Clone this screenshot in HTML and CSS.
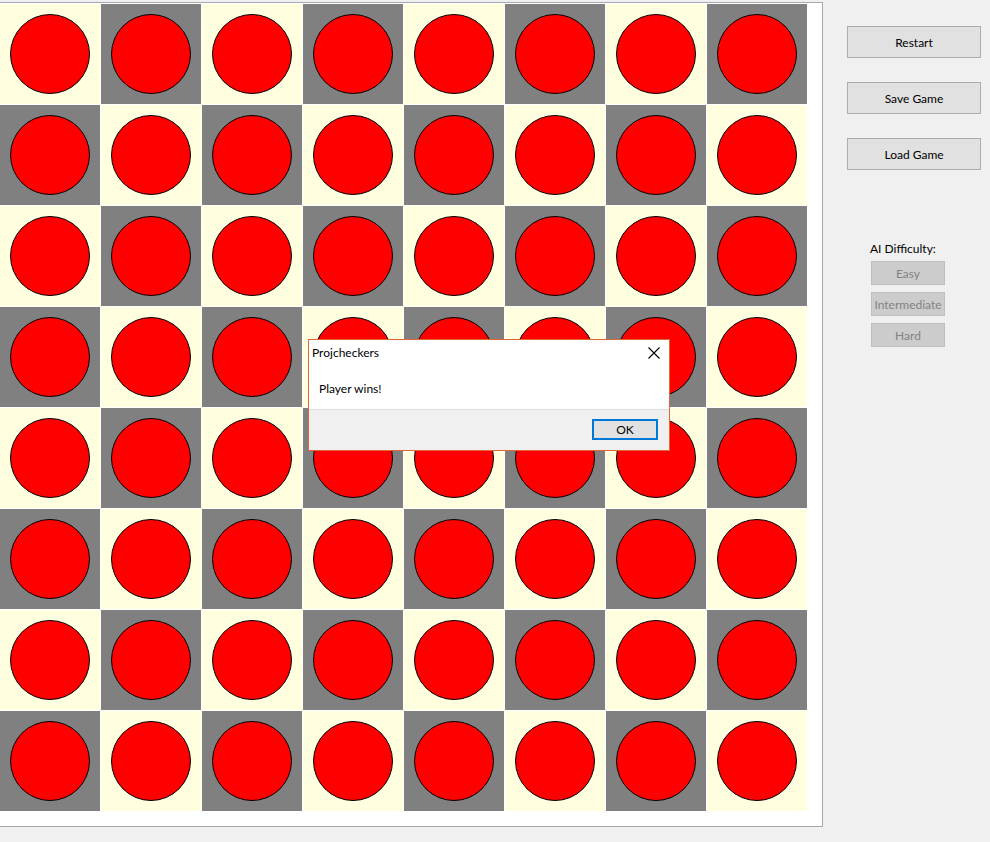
FILE: index.html
```html
<!DOCTYPE html>
<html>
<head>
<meta charset="utf-8">
<link rel="stylesheet" href="styles.css">
</head>
<body>
<div class="app">
  <div class="board-panel">
    <div class="board">
      <div class="cell light"><div class="piece"></div></div><div class="cell dark"><div class="piece"></div></div><div class="cell light"><div class="piece"></div></div><div class="cell dark"><div class="piece"></div></div><div class="cell light"><div class="piece"></div></div><div class="cell dark"><div class="piece"></div></div><div class="cell light"><div class="piece"></div></div><div class="cell dark"><div class="piece"></div></div>
      <div class="cell dark"><div class="piece"></div></div><div class="cell light"><div class="piece"></div></div><div class="cell dark"><div class="piece"></div></div><div class="cell light"><div class="piece"></div></div><div class="cell dark"><div class="piece"></div></div><div class="cell light"><div class="piece"></div></div><div class="cell dark"><div class="piece"></div></div><div class="cell light"><div class="piece"></div></div>
      <div class="cell light"><div class="piece"></div></div><div class="cell dark"><div class="piece"></div></div><div class="cell light"><div class="piece"></div></div><div class="cell dark"><div class="piece"></div></div><div class="cell light"><div class="piece"></div></div><div class="cell dark"><div class="piece"></div></div><div class="cell light"><div class="piece"></div></div><div class="cell dark"><div class="piece"></div></div>
      <div class="cell dark"><div class="piece"></div></div><div class="cell light"><div class="piece"></div></div><div class="cell dark"><div class="piece"></div></div><div class="cell light"><div class="piece"></div></div><div class="cell dark"><div class="piece"></div></div><div class="cell light"><div class="piece"></div></div><div class="cell dark"><div class="piece"></div></div><div class="cell light"><div class="piece"></div></div>
      <div class="cell light"><div class="piece"></div></div><div class="cell dark"><div class="piece"></div></div><div class="cell light"><div class="piece"></div></div><div class="cell dark"><div class="piece"></div></div><div class="cell light"><div class="piece"></div></div><div class="cell dark"><div class="piece"></div></div><div class="cell light"><div class="piece"></div></div><div class="cell dark"><div class="piece"></div></div>
      <div class="cell dark"><div class="piece"></div></div><div class="cell light"><div class="piece"></div></div><div class="cell dark"><div class="piece"></div></div><div class="cell light"><div class="piece"></div></div><div class="cell dark"><div class="piece"></div></div><div class="cell light"><div class="piece"></div></div><div class="cell dark"><div class="piece"></div></div><div class="cell light"><div class="piece"></div></div>
      <div class="cell light"><div class="piece"></div></div><div class="cell dark"><div class="piece"></div></div><div class="cell light"><div class="piece"></div></div><div class="cell dark"><div class="piece"></div></div><div class="cell light"><div class="piece"></div></div><div class="cell dark"><div class="piece"></div></div><div class="cell light"><div class="piece"></div></div><div class="cell dark"><div class="piece"></div></div>
      <div class="cell dark"><div class="piece"></div></div><div class="cell light"><div class="piece"></div></div><div class="cell dark"><div class="piece"></div></div><div class="cell light"><div class="piece"></div></div><div class="cell dark"><div class="piece"></div></div><div class="cell light"><div class="piece"></div></div><div class="cell dark"><div class="piece"></div></div><div class="cell light"><div class="piece"></div></div>
    </div>
  </div>
  <div class="side">
    <div class="actions">
      <button class="btn">Restart</button>
      <button class="btn">Save Game</button>
      <button class="btn">Load Game</button>
    </div>
    <div class="difficulty">
      <div class="diff-label">AI Difficulty:</div>
      <button class="dbtn" disabled>Easy</button>
      <button class="dbtn" disabled>Intermediate</button>
      <button class="dbtn" disabled>Hard</button>
    </div>
  </div>
</div>

<div class="dialog">
  <div class="dialog-body">
    <div class="dialog-title">
      <span>Projcheckers</span>
      <svg class="close" width="12" height="12" viewBox="0 0 12 12"><path d="M0.5 0.5 L11.5 11.5 M11.5 0.5 L0.5 11.5" stroke="#000" stroke-width="1.1" fill="none"/></svg>
    </div>
    <div class="dialog-msg">Player wins!</div>
  </div>
  <div class="dialog-foot">
    <button class="ok">OK</button>
  </div>
</div>
</body>
</html>
```

FILE: styles.css
```css
* { box-sizing: border-box; }
html, body {
  margin: 0;
  padding: 0;
  background: #f0f0f0;
  width: 990px;
  height: 842px;
  overflow: hidden;
  font-family: "Segoe UI", Lato, "Noto Sans", sans-serif;
  font-size: 12px;
  color: #000;
}
.app {
  display: flex;
  align-items: flex-start;
  padding-top: 2px;
}
.board-panel {
  width: 823px;
  background: #fff;
  border-top: 1px solid #a7a7b0;
  border-right: 1px solid #a7a7b0;
  border-bottom: 1px solid #a7a7b0;
  padding: 1px 14px 15px 0;
}
.board {
  display: grid;
  grid-template-columns: repeat(8, 100px);
  grid-auto-rows: 100px;
  gap: 1px;
}
.cell {
  display: flex;
  align-items: center;
  justify-content: center;
}
.light { background: #ffffe0; }
.dark { background: #808080; }
.piece {
  width: 80px;
  height: 80px;
  border-radius: 50%;
  background: #ff0000;
  border: 1px solid #000;
}
.side {
  display: flex;
  flex-direction: column;
  padding-left: 24px;
  padding-top: 24px;
}
.actions {
  display: flex;
  flex-direction: column;
  gap: 24px;
}
.btn {
  width: 134px;
  height: 32px;
  background: #e1e1e1;
  border: 1px solid #adadad;
  font-family: inherit;
  font-size: 12px;
  color: #000;
  padding: 0;
}
.difficulty {
  display: flex;
  flex-direction: column;
  align-items: flex-start;
  padding-left: 24px;
  margin-top: 71px;
  gap: 7px;
}
.diff-label {
  margin-left: -1px;
  line-height: 16px;
  margin-bottom: -3px;
}
.dbtn {
  width: 74px;
  height: 24px;
  background: #cccccc;
  border: 1px solid #bfbfbf;
  color: #838383;
  font-family: inherit;
  font-size: 12px;
  padding: 0;
}
.dialog {
  position: absolute;
  left: 308px;
  top: 339px;
  width: 362px;
  height: 112px;
  border: 1px solid #e0663a;
  background: #f0f0f0;
  display: flex;
  flex-direction: column;
}
.dialog-body {
  background: #fff;
  height: 70px;
  border-bottom: 1px solid #dfdfdf;
}
.dialog-title {
  display: flex;
  justify-content: space-between;
  align-items: center;
  height: 24px;
  padding: 1px 9px 0 3px;
}
.close { display: block; }
.dialog-msg {
  padding: 17px 0 0 10px;
  line-height: 16px;
}
.dialog-foot {
  flex: 1;
  display: flex;
  justify-content: flex-end;
  align-items: flex-start;
  padding: 9px 11px 0 0;
}
.ok {
  width: 66px;
  height: 21px;
  background: #e1e1e1;
  border: 2px solid #0078d7;
  font-family: inherit;
  font-size: 12px;
  color: #000;
  padding: 0;
}
```
